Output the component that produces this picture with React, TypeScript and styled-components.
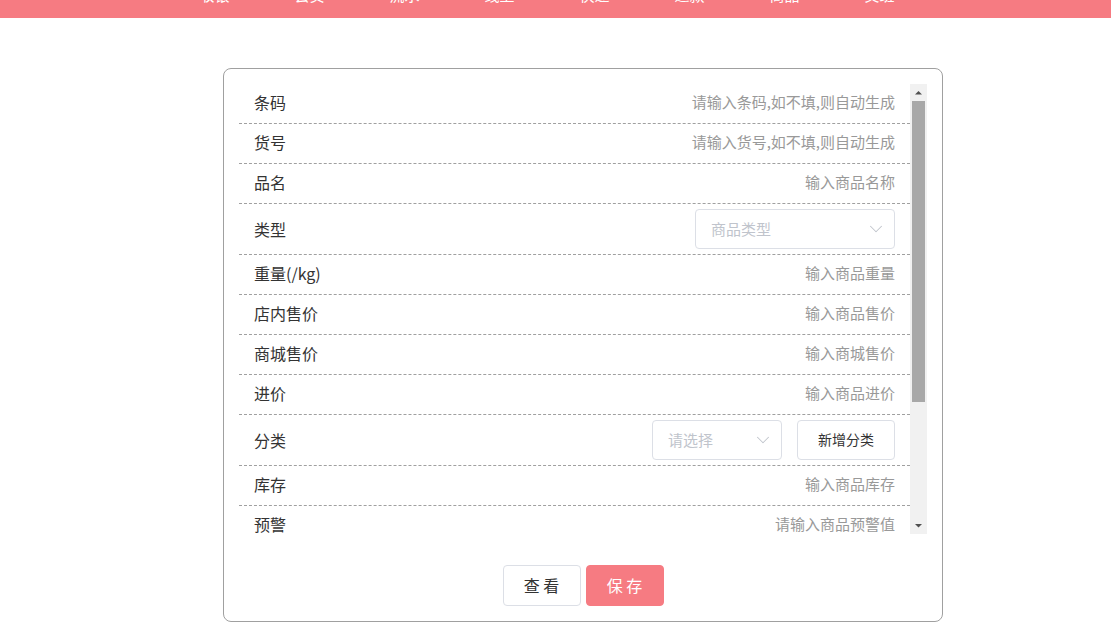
import React from 'react';
import styled, { createGlobalStyle } from 'styled-components';
import { ChevronDown } from 'lucide-react';

const navItems = ['收银', '会员', '流水', '线上', '快递', '退款', '商品', '交班'];

type Field =
  | { label: string; kind: 'input'; placeholder: string }
  | { label: string; kind: 'select'; placeholder: string }
  | { label: string; kind: 'category' };

const fields: Field[] = [
  { label: '条码', kind: 'input', placeholder: '请输入条码,如不填,则自动生成' },
  { label: '货号', kind: 'input', placeholder: '请输入货号,如不填,则自动生成' },
  { label: '品名', kind: 'input', placeholder: '输入商品名称' },
  { label: '类型', kind: 'select', placeholder: '商品类型' },
  { label: '重量(/kg)', kind: 'input', placeholder: '输入商品重量' },
  { label: '店内售价', kind: 'input', placeholder: '输入商品售价' },
  { label: '商城售价', kind: 'input', placeholder: '输入商城售价' },
  { label: '进价', kind: 'input', placeholder: '输入商品进价' },
  { label: '分类', kind: 'category' },
  { label: '库存', kind: 'input', placeholder: '输入商品库存' },
  { label: '预警', kind: 'input', placeholder: '请输入商品预警值' },
  { label: '单位', kind: 'input', placeholder: '输入商品单位' },
  { label: '规格', kind: 'input', placeholder: '输入商品规格' },
  { label: '产地', kind: 'input', placeholder: '输入商品产地' },
  { label: '备注', kind: 'input', placeholder: '输入备注' },
];

const App: React.FC = () => {
  return (
    <>
      <GlobalStyle />
      <NavBar>
        <NavList>
          {navItems.map((item) => (
            <NavItem key={item}>{item}</NavItem>
          ))}
        </NavList>
      </NavBar>
      <Page>
        <Card>
          <ScrollArea>
            <Content>
              {fields.map((field) => (
                <Row key={field.label} $tall={field.kind !== 'input'}>
                  <Label>{field.label}</Label>
                  {field.kind === 'input' && <TextInput placeholder={field.placeholder} />}
                  {field.kind === 'select' && (
                    <Select $width={200}>
                      <span>{field.placeholder}</span>
                      <ChevronDown size={22} strokeWidth={1.1} />
                    </Select>
                  )}
                  {field.kind === 'category' && (
                    <Controls>
                      <Select $width={130}>
                        <span>请选择</span>
                        <ChevronDown size={22} strokeWidth={1.1} />
                      </Select>
                      <SmallButton>新增分类</SmallButton>
                    </Controls>
                  )}
                </Row>
              ))}
            </Content>
            <ScrollBar>
              <ArrowButton>
                <svg width="17" height="17" viewBox="0 0 17 17">
                  <polygon points="5,10.5 12,10.5 8.5,7" fill="#505050" />
                </svg>
              </ArrowButton>
              <Track>
                <Thumb />
              </Track>
              <ArrowButton>
                <svg width="17" height="17" viewBox="0 0 17 17">
                  <polygon points="5,7 12,7 8.5,10.5" fill="#505050" />
                </svg>
              </ArrowButton>
            </ScrollBar>
          </ScrollArea>
          <Footer>
            <Button>查 看</Button>
            <Button $primary>保 存</Button>
          </Footer>
        </Card>
      </Page>
    </>
  );
};

const GlobalStyle = createGlobalStyle`
  body {
    margin: 0;
    background: #fff;
    font-family: "Noto Sans CJK SC", "Noto Sans", sans-serif;
  }
  * {
    box-sizing: border-box;
  }
`;

const NavBar = styled.div`
  height: 18px;
  background: #f67b82;
  overflow: hidden;
`;

const NavList = styled.div`
  display: flex;
  padding-left: 167px;
  margin-top: -13px;
`;

const NavItem = styled.div`
  width: 95px;
  text-align: center;
  color: #fff;
  font-size: 15px;
  line-height: 15px;
`;

const Page = styled.div`
  display: flex;
  padding: 50px 0 0 223px;
`;

const Card = styled.div`
  width: 720px;
  height: 554px;
  border: 1px solid #a0a0a0;
  border-radius: 8px;
  padding: 15px;
  display: flex;
  flex-direction: column;
`;

const ScrollArea = styled.div`
  height: 450px;
  display: flex;
`;

const Content = styled.div`
  flex: 1;
  min-width: 0;
  overflow: hidden;
`;

const ScrollBar = styled.div`
  width: 17px;
  flex-shrink: 0;
  display: flex;
  flex-direction: column;
  background: #f1f1f1;
`;

const ArrowButton = styled.div`
  height: 17px;
  display: flex;

  svg {
    display: block;
  }
`;

const Track = styled.div`
  flex: 1;
  padding: 0 2px;
`;

const Thumb = styled.div`
  height: 301px;
  background: #a8a8a8;
`;

const Row = styled.div<{ $tall?: boolean }>`
  display: flex;
  align-items: center;
  justify-content: space-between;
  gap: 20px;
  min-height: ${(p) => (p.$tall ? '51px' : '40px')};
  padding: ${(p) => (p.$tall ? '0 15px' : '0 15px 3px')};
  border-bottom: 1px dashed #a0a0a0;
`;

const Label = styled.div`
  flex-shrink: 0;
  font-size: 16px;
  line-height: 20px;
  color: #333;
`;

const TextInput = styled.input`
  flex: 1;
  min-width: 0;
  border: none;
  outline: none;
  background: transparent;
  text-align: right;
  font-family: inherit;
  font-size: 15px;
  line-height: 20px;
  color: #333;
  padding: 0;

  &::placeholder {
    color: #999;
  }
`;

const Controls = styled.div`
  display: flex;
  gap: 15px;
`;

const Select = styled.div<{ $width: number }>`
  width: ${(p) => p.$width}px;
  height: 40px;
  display: flex;
  align-items: center;
  justify-content: space-between;
  padding: 0 7px 2px 15px;
  border: 1px solid #dcdfe6;
  border-radius: 4px;
  font-size: 15px;
  color: #c0c4cc;

  svg {
    margin-top: 1px;
  }
`;

const SmallButton = styled.button`
  width: 98px;
  height: 40px;
  border: 1px solid #dcdfe6;
  border-radius: 4px;
  background: #fff;
  font-family: inherit;
  font-size: 14px;
  color: #333;
  padding: 0 0 2px;
`;

const Footer = styled.div`
  display: flex;
  justify-content: center;
  gap: 5px;
  margin-top: 31px;
`;

const Button = styled.button<{ $primary?: boolean }>`
  width: 78px;
  height: 41px;
  border: 1px solid ${(p) => (p.$primary ? '#f67b82' : '#dcdfe6')};
  border-radius: 4px;
  background: ${(p) => (p.$primary ? '#f67b82' : '#fff')};
  color: ${(p) => (p.$primary ? '#fff' : '#333')};
  font-family: inherit;
  font-size: 16px;
  padding: 0 0 2px;
`;

export default App;
